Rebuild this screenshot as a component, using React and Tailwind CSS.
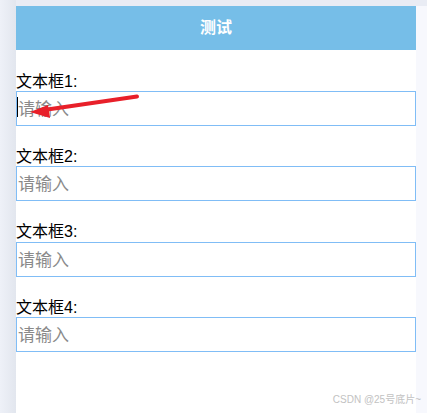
import React from "react";

const font = { fontFamily: '"Liberation Sans", "Noto Sans CJK SC", sans-serif' };

function Field({ n, first }) {
  return (
    <div className="mt-[20px] flex flex-col">
      <div className="h-[20.33px] text-[16px] leading-[22px] text-black whitespace-nowrap">{`文本框${n}:`}</div>
      <div className="relative">
        <input
          className="block h-[35px] w-full border border-[#80bdf6] bg-white pl-[1px] pr-[1px] pb-[2px] text-[17px] text-black outline-none placeholder:text-[#8a8a8a]"
          placeholder="请输入"
          style={{ fontFamily: '"Noto Sans CJK SC", sans-serif' }}
        />
        {first && <div className="absolute left-[1px] top-[6px] h-[20px] w-[1px] bg-black" />}
      </div>
    </div>
  );
}

export default function App() {
  return (
    <div className="relative flex h-[413px] w-[427px] overflow-hidden bg-[#e9ecf4]" style={font}>
      <div className="h-full w-[16px] bg-gradient-to-r from-[#eef1f8] to-[#e2e6ee]" />
      <div className="mt-[6px] flex w-[400px] flex-col bg-white">
        <div className="flex h-[44px] items-center justify-center bg-[#76bee8] text-[16px] font-bold text-white">
          测试
        </div>
        <div className="flex flex-col pt-[0.67px]">
          <Field n={1} first />
          <Field n={2} />
          <Field n={3} />
          <Field n={4} />
        </div>
      </div>
      <div className="mt-[6px] h-full w-[11px] bg-[#f7f8fd]" />
      <svg className="pointer-events-none absolute left-0 top-0" width="427" height="413" viewBox="0 0 427 413">
        <line x1="137" y1="96.5" x2="44" y2="110" stroke="#e8202a" strokeWidth="4" strokeLinecap="round" />
        <polygon points="30,112 48,105 50,118" fill="#e8202a" />
      </svg>
      <div className="absolute bottom-[7px] right-[6px] text-[10px] leading-[12px] text-[#c2c2c2] whitespace-nowrap">
        CSDN @25号底片~
      </div>
    </div>
  );
}
